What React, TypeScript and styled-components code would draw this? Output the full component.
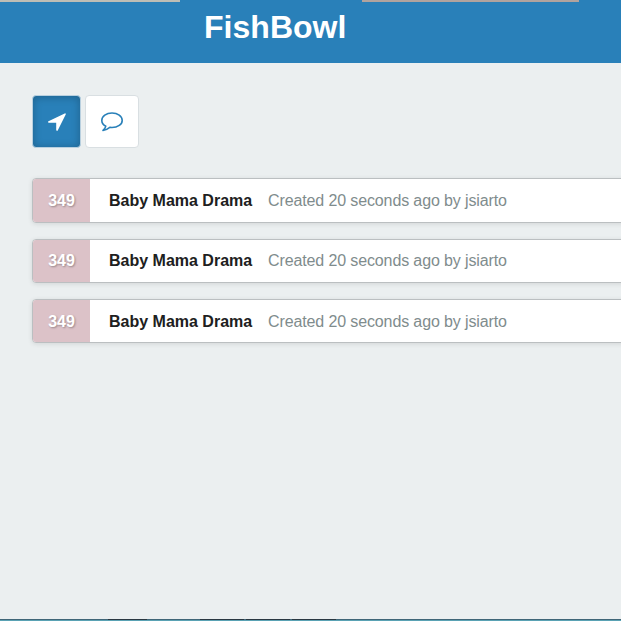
import React from "react";
import styled, { createGlobalStyle } from "styled-components";

const GlobalStyle = createGlobalStyle`
  *, *::before, *::after { box-sizing: border-box; }
  html, body { margin: 0; height: 100%; overflow: hidden; }
  body { background: #ebeff0; font-family: "Liberation Sans", Arial, sans-serif; }
`;

const Page = styled.div`
  height: 100vh;
  display: flex;
  flex-direction: column;
  overflow: hidden;
`;

const Strip = styled.div`
  height: 2px;
  flex: none;
  display: grid;
  grid-template-columns: 180px 182px 217px 1fr;
  background: #2980b9;
`;

const StripPart = styled.span<{ $tone: string }>`
  background: ${(p) => p.$tone};
`;

const Header = styled.header`
  flex: none;
  height: 61px;
  padding-left: 204px;
  background: #2980b9;
`;

const Title = styled.h1`
  margin: 0;
  padding-top: 6px;
  font-size: 32px;
  line-height: 38px;
  font-weight: 700;
  letter-spacing: 0.03px;
  color: #fff;
  white-space: nowrap;
`;

const Main = styled.main`
  flex: 1;
  padding: 32px 0 0 32px;
`;

const Toolbar = styled.div`
  display: flex;
  gap: 4px;
  margin-bottom: 30.45px;
`;

const ToolButton = styled.button<{ $active?: boolean }>`
  display: flex;
  align-items: center;
  justify-content: center;
  width: ${(p) => (p.$active ? 49 : 54)}px;
  height: 53px;
  padding: 0;
  border: 1px solid ${(p) => (p.$active ? "#b9d0df" : "#d9dfe2")};
  border-radius: 4px;
  color: ${(p) => (p.$active ? "#fff" : "#2980b9")};
  background: ${(p) => (p.$active ? "#2980b9" : "#fff")};
  box-shadow: ${(p) => (p.$active ? "inset 0 1px 8px rgba(0, 0, 0, 0.25)" : "none")};
`;

const List = styled.ul`
  margin: 0;
  padding: 0;
  list-style: none;
  display: flex;
  flex-direction: column;
  gap: 16.3px;
`;

const Row = styled.li`
  display: flex;
  align-items: center;
  height: 44.1px;
  margin-right: -6px;
  border: 1px solid #bbbfc1;
  border-radius: 4px;
  background: #fff;
  box-shadow: 0 1px 5px rgba(0, 0, 0, 0.1);
  overflow: hidden;
  font-size: 16px;
  line-height: 20px;
  white-space: nowrap;
`;

const Count = styled.span`
  align-self: stretch;
  width: 57px;
  padding-top: 1px;
  display: flex;
  align-items: center;
  justify-content: center;
  background: #dcc2c8;
  color: #fff;
  font-weight: 700;
  text-shadow: 1px 1px 2px rgba(0, 0, 0, 0.3);
`;

const Topic = styled.strong`
  width: 159px;
  margin-left: 19px;
  padding-top: 1px;
  color: #202020;
`;

const Meta = styled.span`
  padding-top: 1px;
  letter-spacing: -0.12px;
  color: #7f8c8d;
`;

const Footer = styled.div`
  flex: none;
  height: 2px;
  border-top: 1px solid #3f6577;
  background: #5aa2b4;
  display: grid;
  grid-template-columns: 108px 39px 53px 44px 2px 44px 2px 44px 1fr;
`;

const FooterSegment = styled.span<{ $dark?: boolean }>`
  margin-top: -1px;
  height: 1px;
  background: ${(p) => (p.$dark ? "#293741" : "#3f6577")};
`;

const ArrowIcon = () => (
  <svg width="18" height="18" viewBox="0 0 18 18" fill="currentColor" aria-hidden="true">
    <path d="M17.6.6a.8.8 0 0 0-.9-.2L.5 8.2c-.8.4-.5 1.5.3 1.5h7.400v7.400c0 .9 1.2 1.1 1.5.4l8-16a.8.8 0 0 0-.1-.9Z" />
  </svg>
);

const CommentIcon = () => (
  <svg width="24" height="22" viewBox="0 0 24 22" fill="none" stroke="currentColor" strokeWidth="1.6" strokeLinejoin="round" aria-hidden="true">
    <path d="M12 2C6.300 2 1.800 5.400 1.800 9.400c0 2.400 1.500 4.400 4 5.700-.5 2-1.200 3-2.800 4.300 3-.4 5-1.500 6.800-3 .7.1 1.400.1 2.200.1 5.700 0 10.200-3.100 10.200-7.100S17.700 2 12 2Z" />
  </svg>
);

const topics = [1, 2, 3].map((id) => ({
  id,
  count: 349,
  title: "Baby Mama Drama",
  meta: "Created 20 seconds ago by jsiarto",
}));

export default function App() {
  return (
    <Page>
      <GlobalStyle />
      <Strip>
        <StripPart $tone="#bdbdb5" />
        <StripPart $tone="#2980b9" />
        <StripPart $tone="#b1a39e" />
      </Strip>
      <Header>
        <Title>FishBowl</Title>
      </Header>
      <Main>
        <Toolbar>
          <ToolButton $active aria-label="Nearby">
            <ArrowIcon />
          </ToolButton>
          <ToolButton aria-label="Comments">
            <CommentIcon />
          </ToolButton>
        </Toolbar>
        <List>
          {topics.map((t) => (
            <Row key={t.id}>
              <Count>{t.count}</Count>
              <Topic>{t.title}</Topic>
              <Meta>{t.meta}</Meta>
            </Row>
          ))}
        </List>
      </Main>
      <Footer>
        <FooterSegment />
        <FooterSegment $dark />
        <FooterSegment />
        <FooterSegment $dark />
        <FooterSegment />
        <FooterSegment $dark />
        <FooterSegment />
        <FooterSegment $dark />
        <FooterSegment />
      </Footer>
    </Page>
  );
}
